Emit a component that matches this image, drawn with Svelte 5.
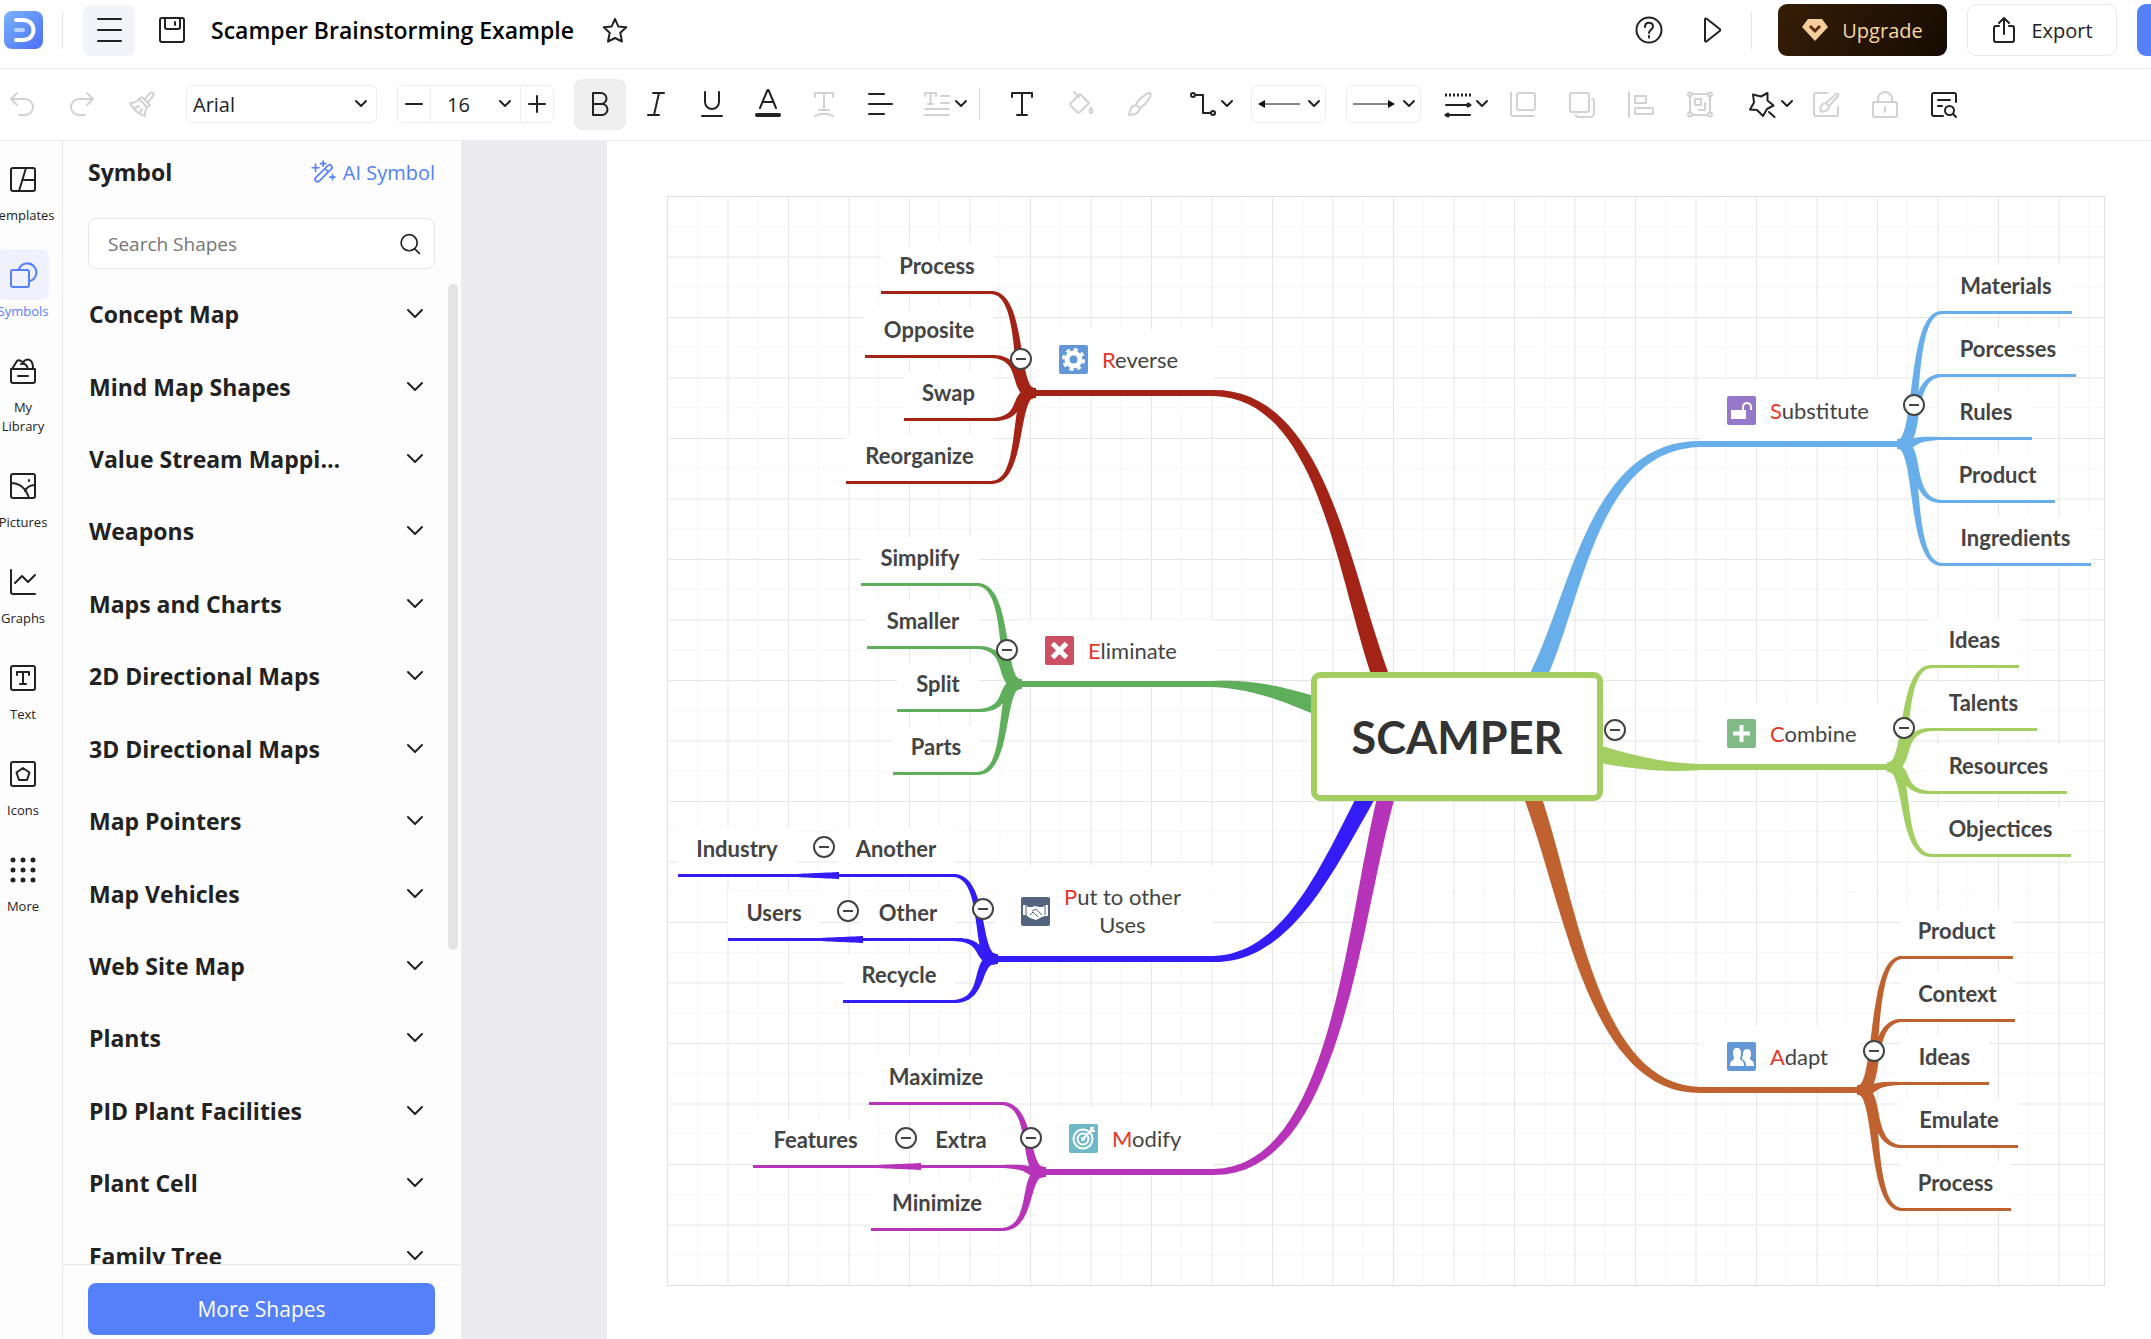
<script lang="ts">
  type Point = [number, number];

  const RED = '#a32317';
  const GREEN = '#5eae5c';
  const BLUE = '#331cf5';
  const PURPLE = '#b733b9';
  const SKY = '#68aeea';
  const LIME = '#a3ce62';
  const ORANGE = '#c06130';

  const title = 'Scamper Brainstorming Example';
  let search = $state('');
  let font = $state('Arial');
  let fontSize = $state(16);
  let activeTab = $state('Symbols');

  const sizes = [10, 12, 14, 15, 16, 17, 18, 20, 24];

  const tabs = [
    { label: 'Templates', icon: 'templates' },
    { label: 'Symbols', icon: 'symbols' },
    { label: 'My Library', icon: 'library' },
    { label: 'Pictures', icon: 'pictures' },
    { label: 'Graphs', icon: 'graphs' },
    { label: 'Text', icon: 'textbox' },
    { label: 'Icons', icon: 'icons' },
    { label: 'More', icon: 'more' },
  ];

  const categories = [
    'Concept Map',
    'Mind Map Shapes',
    'Value Stream Mapping',
    'Weapons',
    'Maps and Charts',
    '2D Directional Maps',
    '3D Directional Maps',
    'Map Pointers',
    'Map Vehicles',
    'Web Site Map',
    'Plants',
    'PID Plant Facilities',
    'Plant Cell',
    'Family Tree',
  ];

  // 26 x 26 stroke icons
  const icons: Record<string, string> = {
    menu: 'M2 2h23M2 13h23M2 24h23',
    save: 'M3 1h20a2 2 0 0 1 2 2v20a2 2 0 0 1-2 2H3a2 2 0 0 1-2-2V3a2 2 0 0 1 2-2zM6 1v9a2 2 0 0 0 2 2h11a2 2 0 0 0 2-2V1M16 5v3',
    star: 'M13 2l3.300 7.400 8 .9-6 5.400 1.700 8.800-7-3.500-7 3.500 1.700-8.800-6-5.400 8-.9z',
    help: 'M13 0.500a12.500 12.500 0 1 1 0 25a12.500 12.500 0 0 1 0-25zM9 10c0-6 8-5.500 8-.5 0 3-4 3.500-4 6.500M13 19v1.500',
    play: 'M6 2.500v21c0 1 1 1.300 1.700.7l13-10.200c.7-.6.7-1.400 0-2l-13-10.200C7 1.200 6 1.500 6 2.500z',
    export: 'M8 9H5a2 2 0 0 0-2 2v12a2 2 0 0 0 2 2h16a2 2 0 0 0 2-2V11a2 2 0 0 0-2-2h-3M13 17V1M8 6l5-5 5 5',
    undo: 'M8 2 2 8l6 6M2 8h14a8 8 0 0 1 0 16h-6',
    redo: 'M18 2l6 6-6 6M24 8H10a8 8 0 0 0 0 16h6',
    painter: 'M16 8l5-6c2-2 5 1 3 3l-5 6M13 6l8 8-3 2-8-8zM10 8c-2 3-5 4-9 4 3 6 8 11 15 13 0-4 0-6 2-9M6 17l4-2M11 21l2-3',
    bold: 'M6 2h8a5.500 5.500 0 0 1 0 11H6zM6 13h9a5.500 5.500 0 0 1 0 11H6z',
    italic: 'M10 2h11M5 24h11M16 2l-5 22',
    underline: 'M6 1v10a7 7 0 0 0 14 0V1M3 25h20',
    color: 'M5 19 12.500 1h1L21 19M8 13h10',
    wordart: 'M4 6V2h18v4M13 2v17M8 19h10M4 25c5-3 13-3 18 0',
    align: 'M2 3h15M2 13h23M2 23h15',
    spacing: 'M1 5V2h11v3M6.500 2v11M4 13h5M17 5h8M17 12h8M1 18h24M1 24h24',
    text: 'M3 6V2h20v4M13 2v22M8 24h10',
    fill: 'M6 1l5 5M12 3 3 12c-1 1-1 2 0 3l6 6c1 1 2 1 3 0l9-9-9-9M3 13M23 17c2 3 2 5 0 5s-2-2 0-5z',
    brush: 'M23 2C20 1 10 10 9 14l4 3C17 15 26 5 23 2zM9 14c-5 1-6 4-7 10 6 0 10-2 11-7',
    connector: 'M5 4h8v18h8',
    front: 'M9 2h14a2 2 0 0 1 2 2v13a2 2 0 0 1-2 2H9a2 2 0 0 1-2-2V4a2 2 0 0 1 2-2zM1 2v21a2 2 0 0 0 2 2h21',
    back: 'M3 2h15a2 2 0 0 1 2 2v15a2 2 0 0 1-2 2H3a2 2 0 0 1-2-2V4a2 2 0 0 1 2-2zM23 8c2 0 2 1 2 2v12a4 4 0 0 1-4 4H9c-2 0-2-1-2-2',
    alignobj: 'M1 1v25M7 5h11v7H7zM7 17h18v6H7z',
    group: 'M3 5v17M23 5v17M5 3h16M5 24h16M3 1.500a2 2 0 1 1 0 4a2 2 0 0 1 0-4zM23 1.500a2 2 0 1 1 0 4a2 2 0 0 1 0-4zM3 21.500a2 2 0 1 1 0 4a2 2 0 0 1 0-4zM23 21.500a2 2 0 1 1 0 4a2 2 0 0 1 0-4zM8 8h6v6H8zM18 12v7h-6',
    magic: 'M17.500 2v7.500l6 5-6.500 3.500-4 7-6-6-7-.5 4-7-1-8 8 2zM19 21l5.500 5',
    edit: 'M14 2H3a2 2 0 0 0-2 2v19a2 2 0 0 0 2 2h20a2 2 0 0 0 2-2v-7M23 3c2-1 3 1 2 2l-9 10-3-3zM13 12c-4 0-6 3-5.500 8.500 6 .5 8.500-1.500 8.500-5.500',
    lock: 'M3 11h20a2 2 0 0 1 2 2v11a2 2 0 0 1-2 2H3a2 2 0 0 1-2-2V13a2 2 0 0 1 2-2zM6 11V8a7 7 0 0 1 14 0v3M13 16v5',
    find: 'M12 25H3a2 2 0 0 1-2-2V4a2 2 0 0 1 2-2h20a2 2 0 0 1 2 2v7M7 9h12M7 15h4M18.500 15a4.500 4.500 0 1 1 0 9a4.500 4.500 0 0 1 0-9zM22 23l3 3',
    search: 'M12 2a9.500 9.500 0 1 1 0 19a9.500 9.500 0 0 1 0-19zM19 19l5 5',
    wand: 'M3 20 18 5c2-2 6 2 4 4L7 24c-3 2-6-2-4-4zM14 9l4 4M12 0v6M9 3h6M3 4v8M-1 8h8M23 16v6M20 19h6',
    templates: 'M3 2h20a2 2 0 0 1 2 2v19a2 2 0 0 1-2 2H3a2 2 0 0 1-2-2V4a2 2 0 0 1 2-2zM16 2 9 25M13 14h12',
    symbols: 'M3 8h14a2 2 0 0 1 2 2v13a2 2 0 0 1-2 2H3a2 2 0 0 1-2-2V10a2 2 0 0 1 2-2zM9 7a9 9 0 1 1 11 12',
    library: 'M1 11h24v12a2 2 0 0 1-2 2H3a2 2 0 0 1-2-2zM8 18h10M2 11l5-8c1-1 2-1 4 0l3 2M13 4c5-5 10-2 10 6M11 6c4-1 6 1 7 5',
    pictures: 'M3 1h20a2 2 0 0 1 2 2v20a2 2 0 0 1-2 2H3a2 2 0 0 1-2-2V3a2 2 0 0 1 2-2zM1 10c9 0 15 6 18 15M15 18c2-4 5-6 10-6M19 7v1',
    graphs: 'M1 1v22a2 2 0 0 0 2 2h22M5 14l7-7 6 6 7-7',
    textbox: 'M3 1h20a2 2 0 0 1 2 2v20a2 2 0 0 1-2 2H3a2 2 0 0 1-2-2V3a2 2 0 0 1 2-2zM7 10V7h12v3M13 7v12M10 19h6',
    icons: 'M3 1h20a2 2 0 0 1 2 2v20a2 2 0 0 1-2 2H3a2 2 0 0 1-2-2V3a2 2 0 0 1 2-2zM13 7l6.500 4.500-2.500 7.500H9l-2.500-7.500z',
    more: 'M3 3v.1M13 3v.1M23 3v.1M3 13v.1M13 13v.1M23 13v.1M3 23v.1M13 23v.1M23 23v.1',
  };

  const textTools = ['bold', 'italic', 'underline', 'color', 'wordart', 'align'];

  // Each branch: topic box from x0 to x1 underlined at y, trunk bezier towards the root
  const branches = [
    {
      label: 'Reverse', badge: 'gear', color: RED, x0: 366, x1: 546, y: 197, side: 'left',
      trunk: [[546, 197], [653, 197], [675, 369], [712, 476]],
      leaves: [
        { label: 'Process', far: 214, y: 96 },
        { label: 'Opposite', far: 198, y: 160 },
        { label: 'Swap', far: 237, y: 223 },
        { label: 'Reorganize', far: 179, y: 286 },
      ],
    },
    {
      label: 'Eliminate', badge: 'cross', color: GREEN, x0: 352, x1: 546, y: 488, side: 'left',
      trunk: [[546, 488], [583, 488], [614, 497], [644, 508]],
      leaves: [
        { label: 'Simplify', far: 194, y: 388 },
        { label: 'Smaller', far: 200, y: 451 },
        { label: 'Split', far: 230, y: 514 },
        { label: 'Parts', far: 226, y: 577 },
      ],
    },
    {
      label: 'Put to other Uses', badge: 'hands', color: BLUE, x0: 328, x1: 546, y: 763, side: 'left', tall: true,
      trunk: [[546, 763], [618, 763], [658, 677], [697, 605]],
      leaves: [
        { label: 'Another', far: 170, y: 679, child: 'Industry', childFar: 11 },
        { label: 'Other', far: 194, y: 743, child: 'Users', childFar: 61 },
        { label: 'Recycle', far: 176, y: 805 },
      ],
    },
    {
      label: 'Modify', badge: 'target', color: PURPLE, x0: 376, x1: 546, y: 976, side: 'left',
      trunk: [[546, 976], [668, 976], [685, 734], [718, 605]],
      leaves: [
        { label: 'Maximize', far: 202, y: 907 },
        { label: 'Extra', far: 252, y: 970, child: 'Features', childFar: 86 },
        { label: 'Minimize', far: 204, y: 1033 },
      ],
    },
    {
      label: 'Substitute', badge: 'unlock', color: SKY, x0: 1034, x1: 1233, y: 248, side: 'right',
      trunk: [[1034, 248], [928, 248], [911, 394], [873, 476]],
      leaves: [
        { label: 'Materials', far: 1405, y: 116 },
        { label: 'Porcesses', far: 1409, y: 179 },
        { label: 'Rules', far: 1365, y: 242 },
        { label: 'Product', far: 1388, y: 305 },
        { label: 'Ingredients', far: 1424, y: 368 },
      ],
    },
    {
      label: 'Combine', badge: 'plus', color: LIME, x0: 1034, x1: 1223, y: 571, side: 'right',
      trunk: [[1034, 571], [998, 572], [965, 566], [936, 559]],
      leaves: [
        { label: 'Ideas', far: 1352, y: 470 },
        { label: 'Talents', far: 1370, y: 533 },
        { label: 'Resources', far: 1400, y: 596 },
        { label: 'Objectices', far: 1404, y: 659 },
      ],
    },
    {
      label: 'Adapt', badge: 'people', color: ORANGE, x0: 1034, x1: 1193, y: 894, side: 'right',
      trunk: [[1034, 894], [928, 894], [906, 719], [867, 605]],
      leaves: [
        { label: 'Product', far: 1346, y: 761 },
        { label: 'Context', far: 1348, y: 824 },
        { label: 'Ideas', far: 1322, y: 887 },
        { label: 'Emulate', far: 1351, y: 950 },
        { label: 'Process', far: 1344, y: 1013 },
      ],
    },
  ];

  const nodes: any[] = [];
  const shapes: { d: string; color: string }[] = [];
  const toggles: Point[] = [[948, 534]];

  // Closed outline that follows a cubic bezier while its width goes from w0 to w1
  function ribbon(p: Point[], w0: number, w1: number, overshoot = 0) {
    const a: string[] = [];
    const b: string[] = [];
    const steps = 32;
    for (let i = 0; i <= steps; i++) {
      const t = i / steps;
      const u = 1 - t;
      const at = (k: number) =>
        u * u * u * p[0][k] + 3 * u * u * t * p[1][k] + 3 * u * t * t * p[2][k] + t * t * t * p[3][k];
      const slope = (k: number) =>
        u * u * (p[1][k] - p[0][k]) + 2 * u * t * (p[2][k] - p[1][k]) + t * t * (p[3][k] - p[2][k]);
      const len = Math.hypot(slope(0), slope(1)) || 1;
      const dx = slope(0) / len;
      const dy = slope(1) / len;
      const half = (w0 + (w1 - w0) * t) / 2;
      const extra = i === steps ? overshoot : 0;
      const x = at(0) + dx * extra;
      const y = at(1) + dy * extra;
      a.push(`${(x - dy * half).toFixed(1)} ${(y + dx * half).toFixed(1)}`);
      b.unshift(`${(x + dy * half).toFixed(1)} ${(y - dx * half).toFixed(1)}`);
    }
    return `M${a.join('L')}L${b.join('L')}Z`;
  }

  for (const branch of branches) {
    const left = branch.side === 'left';
    const start = left ? branch.x0 : branch.x1;
    const inner = start + (left ? -40 : 40);
    const dx = start - inner;
    shapes.push({ d: ribbon(branch.trunk as Point[], 6, 17, 8), color: branch.color });
    toggles.push(left ? [start - 12, branch.tall ? branch.y - 50 : branch.y - 34] : [start + 14, branch.y - 39]);
    for (const leaf of branch.leaves as any[]) {
      const line = leaf.y + 0.5;
      const curve: Point[] = [
        [start, branch.y],
        [start - dx * 0.52, branch.y],
        [inner + dx * 0.8, line],
        [inner - dx / 20, line],
      ];
      shapes.push({ d: ribbon(curve, 11, 3), color: branch.color });
      nodes.push({ label: leaf.label, x: Math.min(inner, leaf.far), w: Math.abs(inner - leaf.far), y: leaf.y, color: branch.color });
      if (leaf.child) {
        const end = leaf.far - 41;
        nodes.push({ label: leaf.child, x: leaf.childFar, w: end - leaf.childFar, y: leaf.y, color: branch.color });
        const taper: Point[] = [[leaf.far + 2, line], [leaf.far - 10, line], [end + 10, line], [end, line]];
        shapes.push({ d: ribbon(taper, 7, 3), color: branch.color });
        toggles.push([leaf.far - 13, leaf.y - 28]);
      }
    }
    shapes.push({ d: `M${start - 3} ${branch.y - 5}h6v10h-6z`, color: branch.color });
  }
</script>

{#snippet icon(name: string)}
  <svg class="icon" viewBox="0 0 26 26" width="26" height="26" aria-hidden="true"><path d={icons[name]} /></svg>
{/snippet}

{#snippet chevron()}
  <svg class="chevron" viewBox="0 0 12 8" width="12" height="8" aria-hidden="true"><path d="M1 1l5 5 5-5" /></svg>
{/snippet}

{#snippet badge(name: string)}
  <svg class="badge" viewBox="0 0 29 29" width="29" height="29" aria-hidden="true">
    {#if name === 'gear'}
      <rect width="29" height="29" rx="2" fill="#6297d8" />
      <circle cx="14.500" cy="14.500" r="6.500" fill="none" stroke="#fff" stroke-width="5" />
      <circle cx="14.500" cy="14.500" r="10" fill="none" stroke="#fff" stroke-width="3" stroke-dasharray="4 3.854" />
    {:else if name === 'cross'}
      <rect width="29" height="29" rx="2" fill="#cc5063" />
      <path d="M7.500 7.500l14 14M21.500 7.500l-14 14" stroke="#fff" stroke-width="5" />
    {:else if name === 'hands'}
      <rect width="29" height="29" rx="2" fill="#53647f" />
      <path d="M2 8h3l2 2h4l3-1 4 1h4l2-2h3v11h-3l-3 1-6 3-6-2-4-3H2z" fill="#fff" />
      <path d="M11 14l4-2 6 6M9 18l3-3 5 5" stroke="#53647f" fill="none" stroke-width="1" />
      <path d="M5 8v10M24 8v10" stroke="#53647f" stroke-width="1" />
    {:else if name === 'target'}
      <rect width="29" height="29" rx="2" fill="#6fb8c9" />
      <g fill="none" stroke="#fff" stroke-width="2">
        <circle cx="14" cy="15" r="9.500" />
        <circle cx="14" cy="15" r="5.500" />
        <path d="M14 15 25 3M22 3v4h4" />
      </g>
      <circle cx="14" cy="15" r="2" fill="#fff" />
    {:else if name === 'unlock'}
      <rect width="29" height="29" rx="2" fill="#9578c9" />
      <path d="M4 14h15v9H4z" fill="#fff" />
      <path d="M16 14v-3a4 4 0 0 1 8 0v3" fill="none" stroke="#fff" stroke-width="2" />
    {:else if name === 'plus'}
      <rect width="29" height="29" rx="2" fill="#7fba87" />
      <path d="M14.500 6v17M6 14.500h17" stroke="#fff" stroke-width="4" />
    {:else}
      <rect width="29" height="29" rx="2" fill="#6297d8" />
      <path d="M10 6c3 0 4 2 4 5s-1 4-1 6c2 2 4 2 4 7H3c0-5 2-5 4-7 0-2-1-3-1-6s1-5 4-5z" fill="#fff" />
      <path d="M20 7c3 0 4 2 4 5s-1 3-1 5c2 2 4 2 4 7h-8c0-4-1-5-4-7 0-2 1-3 1-5s1-5 4-5z" fill="#fff" />
    {/if}
  </svg>
{/snippet}

<div class="app">
  <header class="topbar">
    <a class="logo" href="#home" aria-label="Home">
      <svg viewBox="0 0 39 38" width="39" height="38" aria-hidden="true">
        <defs>
          <linearGradient id="logo-fill" x1="0" y1="0" x2="1" y2="1">
            <stop offset="0" stop-color="#79b4fb" />
            <stop offset="1" stop-color="#4b6df5" />
          </linearGradient>
        </defs>
        <rect width="39" height="38" rx="8" fill="url(#logo-fill)" />
        <path d="M12 9h7c14 0 14 20 0 20h-7" fill="none" stroke="#fff" stroke-width="4" stroke-linecap="round" />
        <path d="M12 19h7" stroke="#b9d3fd" stroke-width="4" stroke-linecap="round" />
      </svg>
    </a>
    <span class="rule"></span>
    <button class="square menu" aria-label="Menu">{@render icon('menu')}</button>
    <button class="plain" aria-label="Save">{@render icon('save')}</button>
    <h1>{title}</h1>
    <button class="plain" aria-label="Favorite">{@render icon('star')}</button>
    <div class="actions">
      <button class="plain" aria-label="Help">{@render icon('help')}</button>
      <button class="plain present" aria-label="Present">{@render icon('play')}</button>
      <span class="rule"></span>
      <button class="action upgrade">
        <svg viewBox="0 0 26 22" width="26" height="22" aria-hidden="true">
          <path d="M6 0h14l6 8-13 14L0 8z" fill="#f5cf9b" />
          <path d="M8 7l5 5 5-5" fill="none" stroke="#5a2c14" stroke-width="3" />
        </svg>
        Upgrade
      </button>
      <button class="action">{@render icon('export')}Export</button>
      <button class="action share" aria-label="Share"></button>
    </div>
  </header>

  <div class="toolbar">
    <div class="group off history">
      <button class="square" aria-label="Undo">{@render icon('undo')}</button>
      <button class="square" aria-label="Redo">{@render icon('redo')}</button>
      <button class="square" aria-label="Format painter">{@render icon('painter')}</button>
    </div>
    <label class="drop font">
      <select bind:value={font} aria-label="Font">
        <option>Arial</option>
        <option>Verdana</option>
      </select>
      {@render chevron()}
    </label>
    <div class="stepper">
      <button aria-label="Decrease font size" onclick={() => (fontSize -= 1)}>
        <svg class="icon" viewBox="0 0 18 18" width="18" height="18"><path d="M1 9h16" /></svg>
      </button>
      <label class="drop size">
        <select bind:value={fontSize} aria-label="Font size">
          {#each sizes as size}<option value={size}>{size}</option>{/each}
        </select>
        {@render chevron()}
      </label>
      <button aria-label="Increase font size" onclick={() => (fontSize += 1)}>
        <svg class="icon" viewBox="0 0 18 18" width="18" height="18"><path d="M1 9h16M9 1v16" /></svg>
      </button>
    </div>
    <div class="group tight">
      {#each textTools as tool}
        <button class="square" class:on={tool === 'bold'} class:off={tool === 'wordart'} aria-label={tool}>
          {#if tool === 'color'}
            <svg class="icon" viewBox="0 0 26 30" width="26" height="30">
              <path d={icons.color} />
              <path d="M2 26h22" stroke-width="4" />
            </svg>
          {:else}
            {@render icon(tool)}
          {/if}
        </button>
      {/each}
      <button class="combo spacing" aria-label="Line spacing"><span class="off">{@render icon('spacing')}</span>{@render chevron()}</button>
    </div>
    <span class="rule short"></span>
    <div class="group first">
      <button class="square" aria-label="Text">{@render icon('text')}</button>
      <button class="square off" aria-label="Fill">{@render icon('fill')}</button>
      <button class="square off" aria-label="Line color">{@render icon('brush')}</button>
    </div>
    <button class="combo" aria-label="Connector">
      <svg class="icon" viewBox="0 0 26 26" width="26" height="26">
        <path d={icons.connector} />
        <circle cx="3" cy="4" r="2" /><circle cx="23" cy="22" r="2" />
      </svg>
      {@render chevron()}
    </button>
    <div class="group arrows">
      <button class="combo boxed" aria-label="Line start">
        <svg viewBox="0 0 42 10" width="42" height="10"><path d="M4 5h38" stroke="#111" /><path d="M0 5l7-4v8z" fill="#111" /></svg>
        {@render chevron()}
      </button>
      <button class="combo boxed" aria-label="Line end">
        <svg viewBox="0 0 42 10" width="42" height="10"><path d="M0 5h38" stroke="#111" /><path d="M42 5l-7-4v8z" fill="#111" /></svg>
        {@render chevron()}
      </button>
    </div>
    <button class="combo" aria-label="Line style">
      <svg class="icon" viewBox="0 0 26 26" width="26" height="26">
        <path d="M0 4h26" stroke-width="3" stroke-dasharray="2 2" stroke-linecap="butt" />
        <path d="M1 14h24M1 24h24" />
        <path d="M23 13l2 1-2 1zM3 23l-2 1 2 1z" stroke-width="3" />
      </svg>
      {@render chevron()}
    </button>
    <div class="group off arrange">
      <button class="square" aria-label="Bring forward">{@render icon('front')}</button>
      <button class="square" aria-label="Send backward">{@render icon('back')}</button>
      <button class="square" aria-label="Align objects">{@render icon('alignobj')}</button>
      <button class="square" aria-label="Group">{@render icon('group')}</button>
    </div>
    <button class="combo" aria-label="Effects">{@render icon('magic')}{@render chevron()}</button>
    <div class="group editing">
      <button class="square off" aria-label="Edit">{@render icon('edit')}</button>
      <button class="square off" aria-label="Lock">{@render icon('lock')}</button>
      <button class="square" aria-label="Find and replace">{@render icon('find')}</button>
    </div>
  </div>

  <div class="workspace">
    <nav class="rail">
      {#each tabs as tab}
        <button class="tab" class:active={tab.label === activeTab} class:dots={tab.icon === 'more'} onclick={() => (activeTab = tab.label)}>
          <span class="tab-icon">{@render icon(tab.icon)}</span>
          <span class="tab-label">{tab.label}</span>
        </button>
      {/each}
    </nav>

    <aside class="panel">
      <div class="panel-head">
        <h2>Symbol</h2>
        <a href="#ai">{@render icon('wand')}AI Symbol</a>
      </div>
      <label class="search">
        <input type="text" placeholder="Search Shapes" aria-label="Search Shapes" bind:value={search} />
        {@render icon('search')}
      </label>
      <div class="scroller">
        <ul>
          {#each categories as category}
            <li>
              <button class="category">
                <span>{category}</span>
                <svg class="icon" viewBox="0 0 16 10" width="16" height="10" aria-hidden="true"><path d="M1 1l7 7 7-7" /></svg>
              </button>
            </li>
          {/each}
        </ul>
        <div class="thumb"></div>
      </div>
      <footer>
        <button class="more">More Shapes</button>
      </footer>
    </aside>

    <main class="stage">
      <div class="page">
        <div class="sheet">
          <svg class="layer" viewBox="0 0 1438 1090" aria-hidden="true">
            <defs>
              <pattern id="grid" width="60.500" height="60.500" patternUnits="userSpaceOnUse">
                <path d="M30.500 0v60.500M0 30.500h60.500" stroke="#f5f5f5" />
                <path d="M.5 0v60.500M0 .5h60.500" stroke="#e6e6e6" fill="none" />
              </pattern>
            </defs>
            <rect width="1438" height="1090" fill="url(#grid)" />
            <rect x=".5" y=".5" width="1437" height="1089" fill="none" stroke="#e0e0e0" />
          </svg>

          {#each nodes as node}
            <div class="leaf" style="left:{node.x}px; top:{node.y - 47}px; width:{node.w}px; border-color:{node.color}">{node.label}</div>
          {/each}
          {#each branches as branch}
            <div
              class="topic"
              class:tall={branch.tall}
              style="left:{branch.x0}px; bottom:{1090 - branch.y - 3}px; width:{branch.x1 - branch.x0}px; border-color:{branch.color}"
            >
              {@render badge(branch.badge)}
              <span><em>{branch.label[0]}</em>{branch.label.slice(1)}</span>
            </div>
          {/each}

          <svg class="layer" viewBox="0 0 1438 1090" aria-hidden="true">
            {#each shapes as shape}
              <path d={shape.d} fill={shape.color} />
            {/each}
          </svg>

          <div class="root">SCAMPER</div>
          {#each toggles as [x, y]}
            <button class="toggle" style="left:{x - 11}px; top:{y - 11}px" aria-label="Collapse"></button>
          {/each}
        </div>
      </div>
    </main>
  </div>
</div>

<style>
  :global(body) {
    margin: 0;
    overflow: hidden;
  }
  .app {
    display: flex;
    flex-direction: column;
    height: 100vh;
    font-family: "Open Sans", "Noto Sans", sans-serif;
    font-size: 20px;
    color: #222;
    background: #fff;
  }
  button,
  select,
  input {
    font: inherit;
    color: inherit;
    background: none;
    border: 0;
    padding: 0;
    margin: 0;
  }
  button {
    display: flex;
    align-items: center;
    justify-content: center;
    flex: none;
    cursor: pointer;
  }
  svg {
    display: block;
    flex: none;
  }
  .icon,
  .chevron {
    fill: none;
    stroke: currentColor;
    stroke-width: 2;
    stroke-linecap: round;
    stroke-linejoin: round;
    overflow: visible;
  }
  .rule {
    width: 1px;
    height: 38px;
    background: #e6e6ea;
    flex: none;
  }
  .square {
    width: 52px;
    height: 51px;
    border-radius: 8px;
  }
  .off {
    color: #d2d2d2;
  }

  /* top bar */
  .topbar {
    display: flex;
    align-items: center;
    height: 60px;
    padding: 0 0 8px 4px;
    border-bottom: 1px solid #e8e8e8;
    overflow: hidden;
    flex: none;
  }
  .topbar > .rule {
    margin: 0 20px 0 19px;
  }
  .menu {
    background: #f3f4f9;
    margin-right: 24px;
  }
  h1 {
    margin: 0 28px 0 26px;
    font-size: 23px;
    line-height: 32px;
    font-weight: 600;
    color: #000;
    white-space: nowrap;
  }
  .actions {
    display: flex;
    align-items: center;
    margin: 0 -86px 0 auto;
  }
  .present {
    margin: 0 26px 0 37px;
  }
  .action {
    gap: 14px;
    height: 52px;
    box-sizing: border-box;
    width: 150px;
    margin-left: 20px;
    border: 1px solid #e8e8e8;
    border-radius: 9px;
  }
  .upgrade {
    width: 169px;
    margin-left: 26px;
    border: 0;
    color: #f9d7a1;
    background: linear-gradient(120deg, #361e07, #150b02);
  }
  .share {
    width: 100px;
    border: 0;
    background: #5480f9;
  }

  /* toolbar */
  .toolbar {
    display: flex;
    align-items: center;
    height: 70px;
    margin-left: -4px;
    padding-bottom: 1px;
    border-bottom: 1px solid #ececec;
    flex: none;
  }
  .group {
    display: flex;
    align-items: center;
    gap: 7px;
    flex: none;
  }
  .group.history {
    gap: 8px;
  }
  .group.tight {
    gap: 4px;
    margin-left: 20px;
  }
  .drop {
    display: grid;
    align-items: center;
    box-sizing: border-box;
  }
  .drop select {
    grid-area: 1 / 1;
    appearance: none;
    height: 36px;
    outline: 0;
  }
  .drop .chevron {
    grid-area: 1 / 1;
    justify-self: end;
    margin-right: 9px;
    pointer-events: none;
  }
  .font {
    width: 191px;
    height: 38px;
    margin-left: 18px;
    border: 1px solid #ececec;
    border-radius: 6px;
  }
  .font select {
    padding-left: 6px;
  }
  .stepper {
    display: flex;
    margin-left: 20px;
    border: 1px solid #ececec;
    border-radius: 6px;
  }
  .stepper button {
    width: 32px;
  }
  .size {
    width: 91px;
    border: 1px solid #ececec;
    border-width: 0 1px;
  }
  .size select {
    padding-left: 16px;
  }
  .on {
    background: #efefef;
  }
  .combo {
    gap: 5px;
  }
  .spacing {
    margin: 0 12px 0 14px;
  }
  .short {
    height: 32px;
    background: #d8d8d8;
  }
  .first {
    margin: 0 24px 0 16px;
  }
  .arrows {
    gap: 20px;
    margin: 0 24px 0 18px;
  }
  .boxed {
    gap: 8px;
    width: 75px;
    height: 38px;
    box-sizing: border-box;
    border: 1px solid #ececec;
    border-radius: 6px;
  }
  .arrange {
    margin: 0 24px 0 9px;
  }
  .editing {
    margin-left: 7px;
  }

  /* left rail */
  .workspace {
    display: flex;
    flex: 1;
    min-height: 0;
  }
  .rail {
    display: flex;
    flex-direction: column;
    gap: 24px;
    width: 78px;
    margin-left: -16px;
    padding-top: 12px;
    border-right: 1px solid #e8e8ec;
    background: #fdfdfe;
    flex: none;
  }
  .tab {
    flex-direction: column;
    gap: 2px;
    font-size: 13px;
    line-height: 19px;
  }
  .tab-icon {
    display: grid;
    place-items: center;
    width: 51px;
    height: 51px;
    border-radius: 8px;
  }
  .tab-label {
    width: 48px;
    display: flex;
    justify-content: center;
    text-align: center;
  }
  .active {
    color: #5480f9;
  }
  .active .tab-icon {
    background: #eff2fe;
  }
  .dots .icon {
    stroke-width: 5;
  }

  /* symbol panel */
  .panel {
    display: flex;
    flex-direction: column;
    width: 398px;
    background: #fdfdfe;
    flex: none;
  }
  .panel-head {
    display: flex;
    align-items: center;
    justify-content: space-between;
    padding: 15px 26px 0 25px;
    height: 32px;
  }
  h2 {
    margin: 0;
    font-size: 23px;
    line-height: 32px;
    font-weight: 700;
  }
  .panel-head a {
    display: flex;
    align-items: center;
    gap: 8px;
    color: #5480f9;
    text-decoration: none;
  }
  .panel-head .icon {
    width: 22px;
    height: 22px;
  }
  .search {
    display: flex;
    align-items: center;
    height: 49px;
    margin: 30px 26px 0 25px;
    padding: 0 13px 0 19px;
    border: 1px solid #e6e6e8;
    border-radius: 8px;
    background: #fff;
  }
  .search input {
    flex: 1;
    min-width: 0;
    outline: 0;
    font-size: 19px;
  }
  .search input::placeholder {
    color: #757575;
  }
  .search .icon {
    width: 22px;
    height: 22px;
    margin-left: 8px;
  }
  .scroller {
    flex: 1;
    min-height: 0;
    margin-top: 9px;
    display: flex;
    overflow: hidden;
  }
  ul {
    flex: 1;
    display: flex;
    flex-direction: column;
    height: calc(100% + 28px);
    margin: 0;
    padding: 0;
    list-style: none;
  }
  li {
    display: flex;
    flex: 1;
    min-height: 0;
  }
  .category {
    flex: 1;
    justify-content: space-between;
    padding: 0 25px 0 26px;
    font-size: 23px;
    font-weight: 700;
  }
  .category span {
    max-width: 254px;
    overflow: hidden;
    white-space: nowrap;
    text-overflow: ellipsis;
  }
  .thumb {
    width: 10px;
    height: 67.500%;
    margin: 6px 3px 0 0;
    border-radius: 5px;
    background: #e4e4e4;
  }
  footer {
    padding: 18px 26px 4px 25px;
    border-top: 1px solid #e6e6e8;
  }
  .more {
    width: 100%;
    height: 52px;
    border-radius: 8px;
    font-size: 21px;
    color: #fff;
    background: #5480f9;
  }

  /* canvas */
  .stage {
    display: flex;
    flex: 1;
    min-width: 0;
    overflow: hidden;
    background: #ebebf0;
  }
  .page {
    flex: 1;
    margin-left: 146px;
    padding: 55px 0 0 60px;
    background: #fff;
  }
  .sheet {
    position: relative;
    width: 1438px;
    height: 1090px;
    font-family: Lato, Carlito, sans-serif;
    font-size: 22px;
    color: #444;
  }
  .layer {
    position: absolute;
    inset: 0;
    width: 100%;
    height: 100%;
  }
  .leaf {
    position: absolute;
    display: flex;
    align-items: center;
    justify-content: center;
    box-sizing: border-box;
    height: 49px;
    padding-bottom: 6px;
    border-bottom: 3px solid;
    background: #fff;
    font-weight: 700;
    white-space: nowrap;
  }
  .topic {
    position: absolute;
    display: flex;
    align-items: center;
    gap: 14px;
    box-sizing: border-box;
    height: 67px;
    padding-left: 26px;
    border-bottom: 6px solid;
    background: #fff;
  }
  .topic.tall {
    height: 96px;
    padding-right: 18px;
    gap: 0;
    line-height: 28px;
  }
  .tall span {
    flex: 1;
    text-align: center;
  }
  em {
    font-style: normal;
    color: #e53629;
  }
  .root {
    position: absolute;
    left: 644px;
    top: 476px;
    display: grid;
    place-items: center;
    box-sizing: border-box;
    width: 292px;
    height: 129px;
    border: 6px solid #a3ce62;
    border-radius: 9px;
    background: #fff;
    font-size: 45px;
    font-weight: 700;
    color: #333;
  }
  .toggle {
    position: absolute;
    box-sizing: border-box;
    width: 22px;
    height: 22px;
    border: 2px solid #444;
    border-radius: 50%;
    background: #fff;
  }
  .toggle::before {
    content: "";
    width: 10px;
    height: 2px;
    background: #444;
  }
</style>
